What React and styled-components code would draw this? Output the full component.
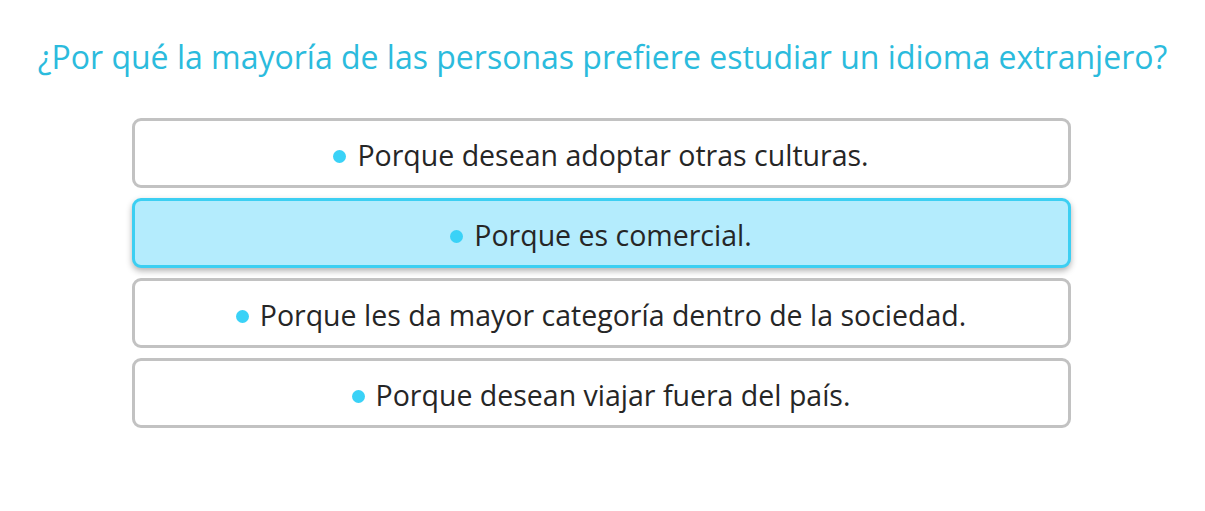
import React from 'react';
import styled, { createGlobalStyle } from 'styled-components';

const GlobalStyle = createGlobalStyle`
  body {
    margin: 0;
    background: #ffffff;
    font-family: "Open Sans", "Noto Sans", sans-serif;
  }
`;

const Page = styled.div`
  display: flex;
  flex-direction: column;
  align-items: center;
  padding-top: 35px;
`;

const Question = styled.h2`
  margin: 0 0 39px;
  font-size: 32px;
  line-height: 44px;
  font-weight: 400;
  color: #2bbbdd;
  text-align: center;
  white-space: nowrap;
`;

const Options = styled.div`
  display: flex;
  flex-direction: column;
  gap: 10px;
  width: 939px;
  margin-right: 3px;
`;

const Option = styled.div`
  box-sizing: border-box;
  height: 70px;
  padding-top: 3px;
  display: flex;
  align-items: center;
  justify-content: center;
  gap: 11px;
  border: 3px solid ${props => (props.selected ? '#3ccff2' : '#c2c2c2')};
  border-radius: 9px;
  background: ${props => (props.selected ? '#b4ecfd' : '#ffffff')};
  box-shadow: ${props => (props.selected ? '0 3px 6px rgba(0, 0, 0, 0.3)' : 'none')};
  font-size: 28.5px;
  color: #262626;
`;

const Dot = styled.span`
  width: 13px;
  height: 13px;
  margin-top: 3px;
  border-radius: 50%;
  background: #3ad2f7;
  flex-shrink: 0;
`;

const answers = [
  'Porque desean adoptar otras culturas.',
  'Porque es comercial.',
  'Porque les da mayor categoría dentro de la sociedad.',
  'Porque desean viajar fuera del país.',
];

const App = () => (
  <>
    <GlobalStyle />
    <Page>
      <Question>¿Por qué la mayoría de las personas prefiere estudiar un idioma extranjero?</Question>
      <Options>
        {answers.map((text, i) => (
          <Option key={text} selected={i === 1}>
            <Dot />
            {text}
          </Option>
        ))}
      </Options>
    </Page>
  </>
);

export default App;
